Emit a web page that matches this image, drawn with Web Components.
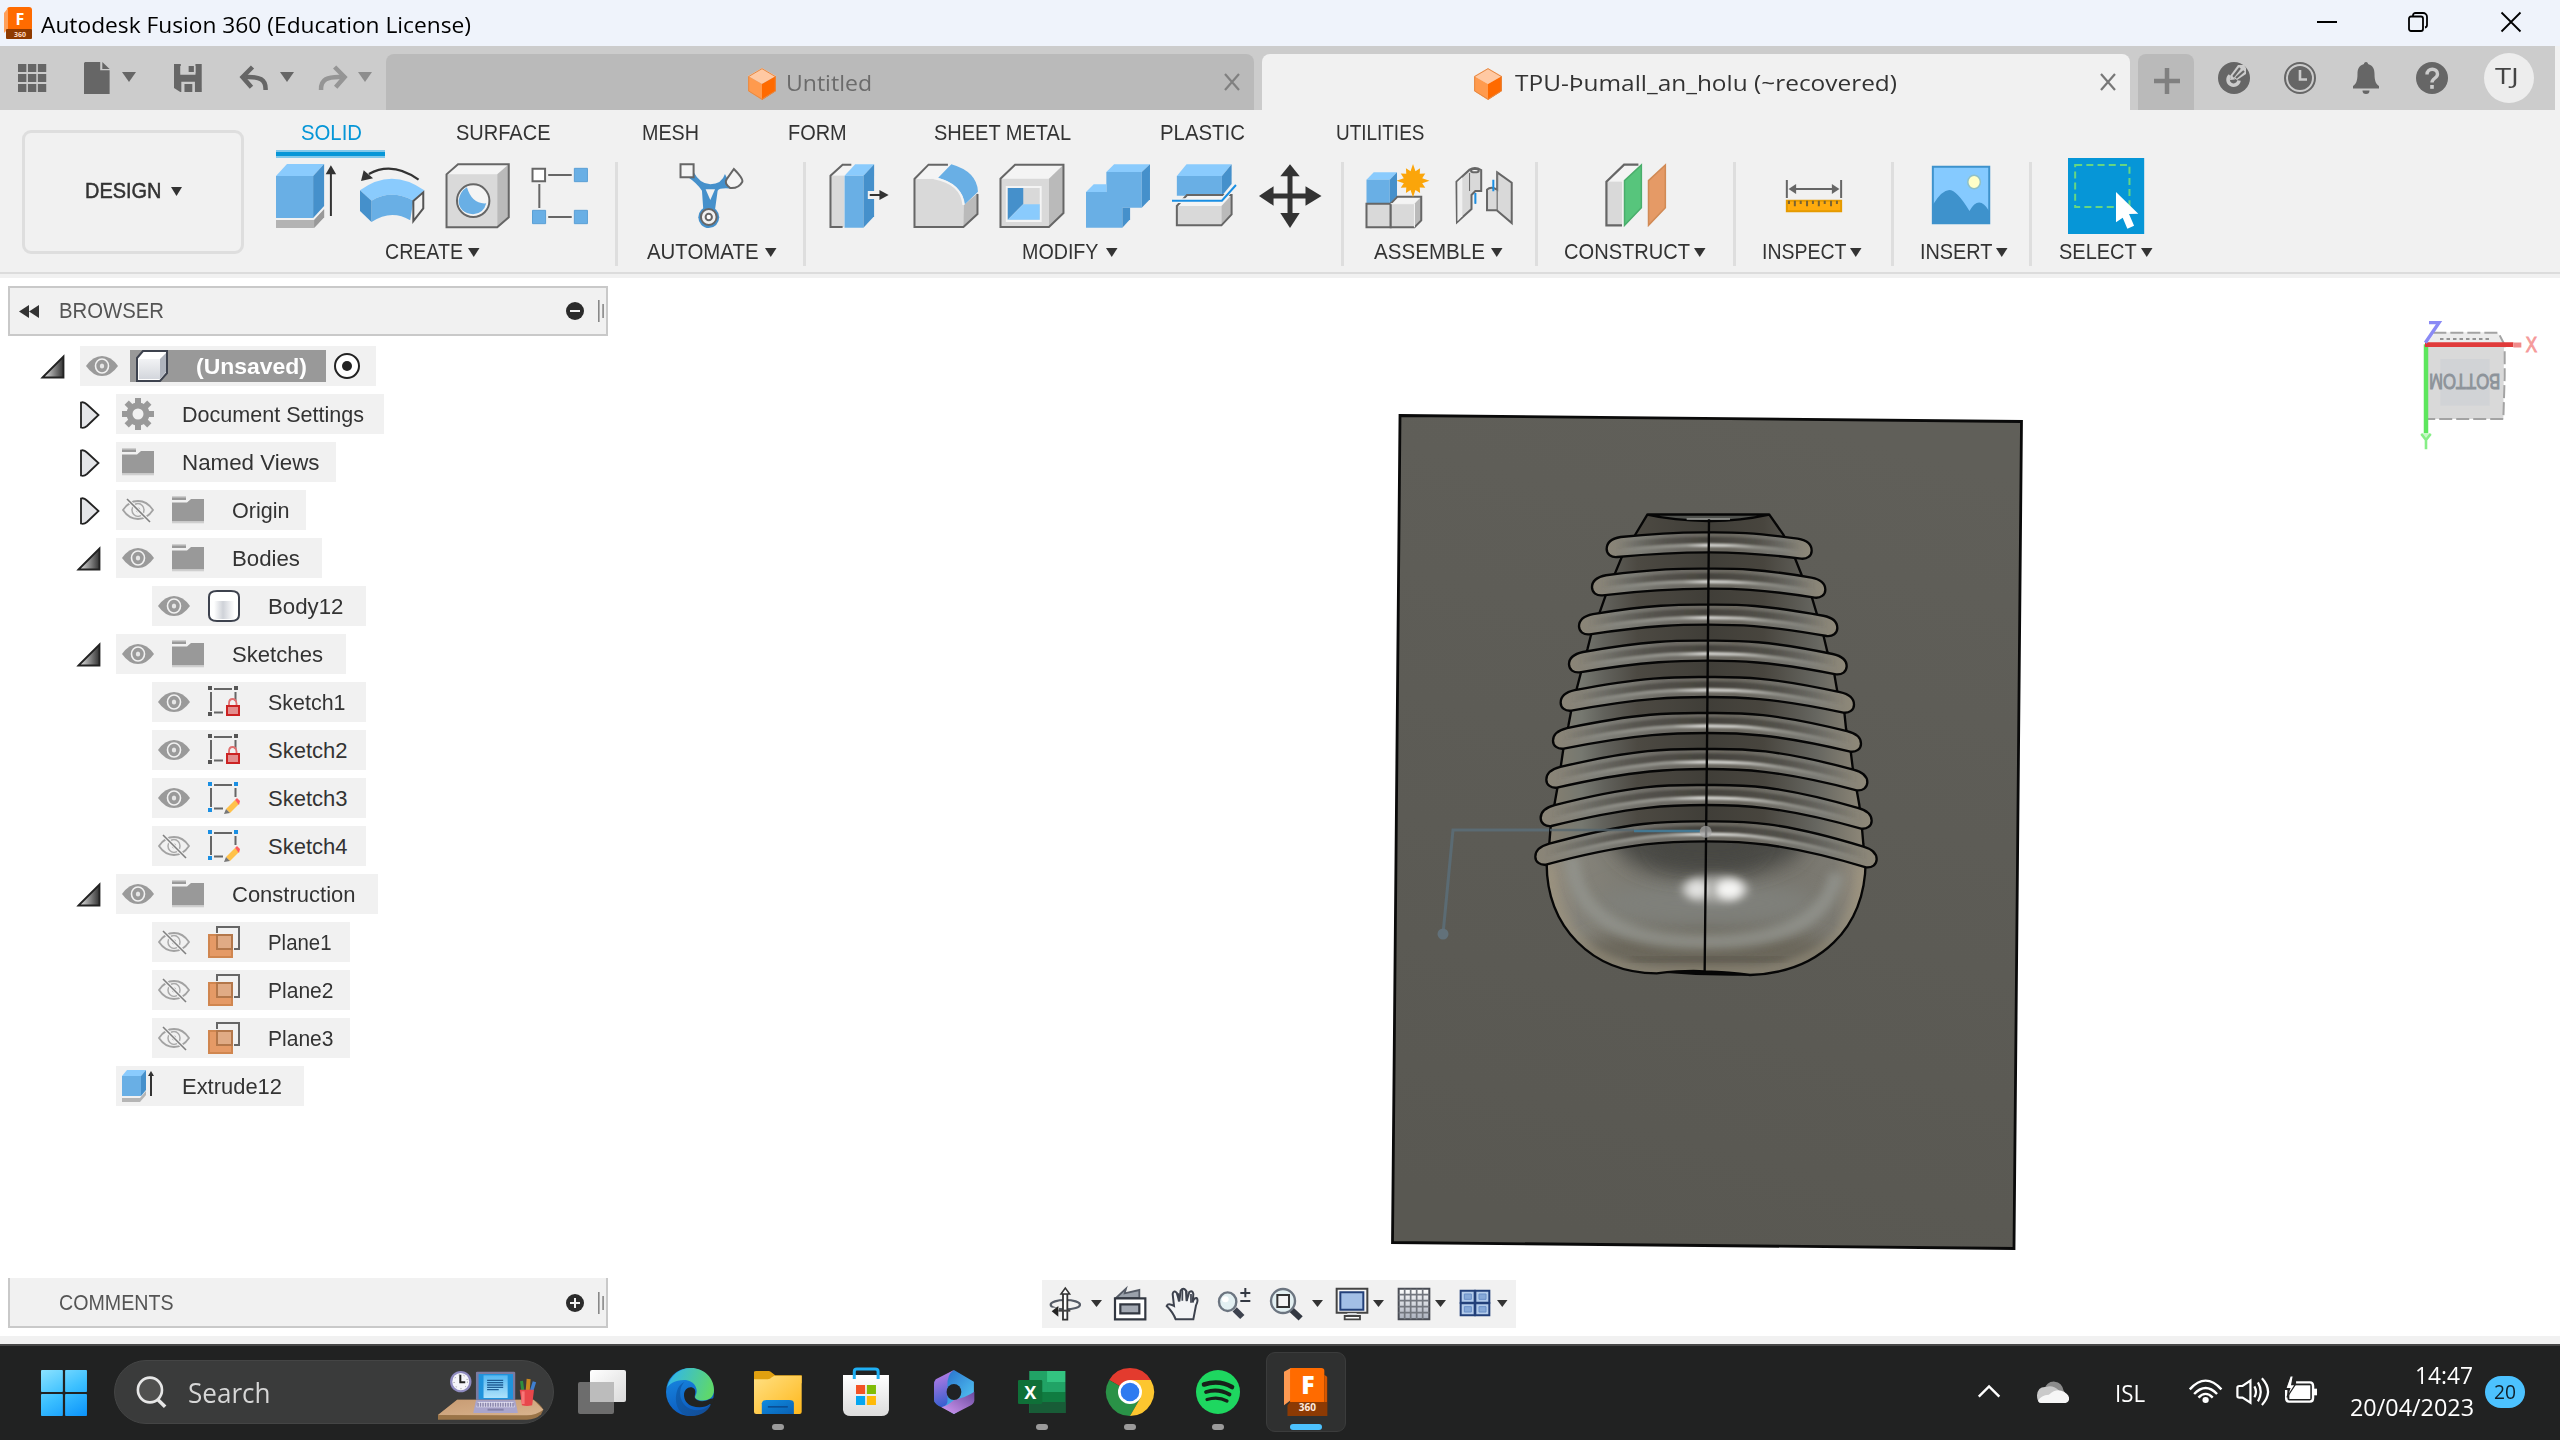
<!DOCTYPE html>
<html lang="en">
<head>
<meta charset="utf-8">
<title>Autodesk Fusion 360</title>
<style>
html,body{margin:0;padding:0;background:#fff}
body{width:2560px;height:1440px;overflow:hidden;font-family:"Liberation Sans",Arial,sans-serif;color:#333}
</style>
</head>
<body>
<fusion-desktop></fusion-desktop>
<script>
const CSS = `*{box-sizing:border-box}svg{display:block;overflow:visible}svg *{vector-effect:non-scaling-stroke}
.row{display:flex;align-items:flex-start;flex:none}.row>*{flex:none}`;

/* drawing frames: origin and horizontal scale of each icon sheet (vertical scale is 3) */
const F = {
  a:[0,0,1568/820], b:[800,110,1568/760], c:[1540,110,1568/660], d:[1200,0,1568/1360],
  t:[0,280,1568/620], u:[0,690,1568/620], v:[2380,300,3], n:[1030,1270,3],
  s:[0,1260,2.24], k:[680,1340,1568/680], y:[1940,1340,1568/620]
};
function ic(f,x0,y0,x1,y1,inner){
  const [ox,oy,s]=F[f], w=(x1-x0)/s, h=(y1-y0)/3;
  return {x:ox+x0/s,y:oy+y0/3,w,h,html:`<svg width="${w.toFixed(2)}" height="${h.toFixed(2)}" viewBox="${x0} ${y0} ${x1-x0} ${y1-y0}" preserveAspectRatio="none">${inner}</svg>`};
}
function px(x,y,w,h,inner){
  return {x,y,w,h,html:`<svg width="${w}" height="${h}" viewBox="0 0 ${w} ${h}">${inner}</svg>`};
}
function tx(t,x0,x1,cy,size,style=''){
  const h=Math.round(size*1.3);
  return {x:x0-.5,y:cy-h/2,w:x1-x0+2,h,html:`<fit-text w="${(x1-x0+2).toFixed(1)}" style="font-size:${size}px;line-height:${h}px;height:${h}px;${style}">${t}</fit-text>`};
}
function box(x,y,w,h,style,html=''){return {x,y,w,h,html:`<div style="width:${w}px;height:${h}px;${style}">${html}</div>`};}
function row(x0,y0,items){
  let c=x0,o='';
  for(const i of items){o+=`<div style="margin:${(i.y-y0).toFixed(2)}px 0 0 ${(i.x-c).toFixed(2)}px;width:${i.w}px">${i.html}</div>`;c=i.x+i.w;}
  return `<div class="row">${o}</div>`;
}
const P=(pts,fill,extra='')=>`<polygon points="${pts}" fill="${fill}" ${extra}/>`;
const R=(x,y,w,h,fill,extra='')=>`<rect x="${x}" y="${y}" width="${w}" height="${h}" fill="${fill}" ${extra}/>`;
const D=(d,fill,extra='')=>`<path d="${d}" fill="${fill}" ${extra}/>`;
const E=(x,y,rx,ry,fill,extra='')=>`<ellipse cx="${x}" cy="${y}" rx="${rx}" ry="${ry}" fill="${fill}" ${extra}/>`;
const L=(d,c,w,extra='')=>`<path d="${d}" fill="none" stroke="${c}" stroke-width="${w}" ${extra}/>`;
const B1='#69afe5',B2='#8acbfd',B3='#4590cb',G1='#d9d9d9',G2='#f4f4f4',G3='#bababa',SK='stroke="#666" stroke-width="2"';
const caret=(x,cy,w=12,h=9,c='#333')=>px(x,cy-h/2,w,h,P(`0,0 ${w},0 ${w/2},${h}`,c));

function def(name,fn){
  customElements.define(name,class extends HTMLElement{
    constructor(){super();this.attachShadow({mode:'open'});}
    connectedCallback(){this.shadowRoot.innerHTML=`<style>${CSS}</style>`+fn(this);}
  });
}

customElements.define('fit-text',class extends HTMLElement{
  constructor(){super();this.attachShadow({mode:'open'}).innerHTML='<style>:host{display:block;white-space:nowrap}span{display:inline-block;transform-origin:0 0}</style><span><slot></slot></span>';}
  connectedCallback(){
    const w=parseFloat(this.getAttribute('w')),s=this.shadowRoot.querySelector('span');
    this.style.width=w+'px';
    const n=s.getBoundingClientRect().width;
    if(n>0)s.style.transform=`scaleX(${(w/n).toFixed(4)})`;
  }
});

/* ---------- title bar ---------- */
def('window-titlebar',()=>`<style>:host{display:block;height:46px;background:#eff3fb;color:#000;font-family:"Open Sans","Noto Sans",sans-serif}</style>`+
 row(0,0,[
  px(4,7,28,32,R(3,0,25,24,'#ff6b00','rx="3"')+D('M0 6L4 1V22L0 26Z','#ff9f5a')+R(2,22,26,10,'#8f3a00','rx="1"')+`<text x="16" y="18" font-size="16" font-weight="700" text-anchor="middle" fill="#fff">F</text><text x="16" y="30" font-size="7" font-weight="700" text-anchor="middle" fill="#ffd9c0">360</text>`),
  tx('Autodesk Fusion 360 (Education License)',41,469,25,21.5),
  px(2317,21,20,3,R(0,0,20,2,'#000')),
  px(2408,12,20,20,L('M1 6.5a2 2 0 0 1 2-2H13a2 2 0 0 1 2 2V17a2 2 0 0 1-2 2H3a2 2 0 0 1-2-2Z','#000',1.8)+L('M5 4.5V3.500a2.500 2.500 0 0 1 2.500-2.500H15a4 4 0 0 1 4 4V13a2.500 2.500 0 0 1-2 2.500','#000',1.8)),
  px(2501,12,20,20,L('M0.500 0.500L19.500 19.500M19.500 0.500L0.500 19.500','#000',1.8))
 ]));

/* ---------- document tabs ---------- */
const cube=(x)=>px(x,68,28,32,P('14,0 28,8 14,16 0,8','#ffc9a3')+P('0,8 14,16 14,32 0,23','#ff9a4d')+P('28,8 14,16 14,32 28,23','#ff6a00')+L('M14 .7L27.300 8.500V23L14 31.200L.7 23V8.500Z','#e58a45',1));
const cross=(x,c)=>px(x-8,74,16,16,L('M1 0L15 16M15 0L1 16',c,2.2));
def('doc-tabs',()=>`<style>:host{display:flex;height:64px;background:#ccc;width:2555px;font-family:"Open Sans","Noto Sans",sans-serif;align-items:flex-start}
 .tab{height:56px;margin-top:8px;border-radius:8px 8px 0 0;flex:none}.q{flex:none;width:386px}</style>`+
 `<div class="q">`+row(0,46,[
  ic('a',34,192,88,276,[0,1,2].map(i=>[0,1,2].map(j=>R(34+i*19,192+j*30,16,24,'#666')).join('')).join('')),
  ic('a',161,186,210,282,D('M163 186H192V211H210V282H161V189Z','#666')+P('196,186 210,207 196,207','#666')),
  caret(122,76.5,14,10,'#666'),
  ic('a',333,192,386,276,D('M333 192H386V276H345L333 264Z','#666')+D('M345 198V224H374V198H370V218H362V198Z','#ccc')+R(346,192,28,28,'#ccc')+R(361,198,10,18,'#666')+D('M347 276V245H373V276H368V252H353V276Z','#ccc')),
  ic('a',460,198,510,270,L('M507 270C508 238 496 229 468 231','#666',4.5)+L('M482 201L463 231L480 262','#666',4.5)),
  caret(280,76.5,14,10,'#666'),
  ic('a',612,198,662,270,L('M614 270C613 238 626 229 654 231','#959595',4.5)+L('M640 201L659 231L642 262','#959595',4.5)),
  caret(358,76.5,14,10,'#8d8d8d')])+`</div>
 <div class="tab" style="width:868px;background:#bababa">`+row(386,54,[cube(748),tx('Untitled',786,870,82.5,22.5,'color:#6b6b6b'),cross(1232,'#808080')])+`</div>
 <div class="tab" style="width:868px;margin-left:8px;background:#f1f1f1">`+row(1262,54,[cube(1474),tx('TPU-Þumall_an_holu (~recovered)',1515,1895,82.5,22.5,'color:#333'),cross(2108,'#777')])+`</div>
 <div class="tab" style="width:56px;margin-left:8px;background:#bababa">`+row(2138,54,[px(2154,68,26,26,L('M13 0V26M0 13H26','#808080',4.5))])+`</div>`+
 row(2194,46,[
  px(2218,62,32,32,E(16,16,16,16,'#666')+L('M12 13.500a5.500 5.500 0 1 0 9 5','#ccc',3.6)+D('M12 14L20 3H26L28 6V12L19 18Z','#ccc')+L('M15 15L22 6M18 16L26 9','#666',2.2)+D('M13 12.500L17 17.500L12 18Z','#ccc')),
  px(2284,62,32,32,E(16,16,15,15,'none','stroke="#666" stroke-width="2"')+E(16,16,12,12,'#666')+L('M16 8V17.500H23','#ccc',2.6)),
  px(2353,62,26,32,D('M13 0c1.500 0 2 1 2 2c5 1.500 6.500 5 6.500 10c0 7 1.500 10 4.500 12v2.500H0V24c3-2 4.500-5 4.500-12c0-5 1.500-8.500 6.500-10c0-1 .5-2 2-2Z','#666')+D('M9.500 28.500h7a3.500 3.500 0 0 1-7 0Z','#666')),
  px(2416,62,32,32,E(16,16,16,16,'#666')+L('M11 12.500c0-7 10.500-7 10.500-.5c0 4.500-5.500 4-5.500 8.500','#ccc',3.4)+R(14.2,23,3.6,3.8,'#ccc')),
  box(2484,53,50,50,'border-radius:50%;background:#ededed;display:flex;align-items:center;justify-content:center;color:#444',`<fit-text w="24" style="font-size:21px;line-height:28px;margin:-4px 0 0 -5px">TJ</fit-text>`)
 ]));

/* ---------- ribbon ---------- */
const blk=(x0,x1,y0,y1,dx,dy,c,ex='')=>P(`${x0},${y0} ${x0+dx},${y0-dy} ${x1+dx},${y0-dy} ${x1},${y0}`,c[1],ex)+P(`${x0},${y0} ${x1},${y0} ${x1},${y1} ${x0},${y1}`,c[0],ex)+P(`${x1},${y0} ${x1+dx},${y0-dy} ${x1+dx},${y1-dy} ${x1},${y1}`,c[2],ex);
const BL=[B1,B2,B3],GR=[G1,G2,G3];
const outl=(x0,x1,y0,y1,dx,dy)=>L(`M${x0} ${y1}V${y0}L${x0+dx} ${y0-dy}H${x1+dx}V${y1-dy}L${x1} ${y1}Z`,'#666',2);
const star=(cx,cy,rx,ry)=>{let s='';for(let i=0;i<24;i++){const a=i*Math.PI/12,k=i%2?.58:(i%6==0?1:.86);s+=`${(cx+Math.sin(a)*rx*k).toFixed(1)},${(cy-Math.cos(a)*ry*k).toFixed(1)} `;}return P(s,'#fba50a');};
const I={
 extrude:ic('a',528,492,642,684,D('M528 660H601L620 628V652L600 684H528Z','#b3b3b3')+D('M601 660L620 628V652L601 684Z','#999')+blk(528,599,528,654,21,36,BL)+L('M633 648V515','#333',2)+P('633,496 623,523 643,523','#333')),
 revolve:ic('a',688,500,811,684,D('M688 570Q748 500 811 570L790 601Q748 565 710 601Z',B2)+D('M710 601Q748 565 790 601L784 660Q748 625 710 665Z',B1)+D('M688 570L710 601V665L688 632Z',B3)+D('M790 602L809 576V624L790 662Z','#f1f1f1','stroke="#555" stroke-width="2"')+L('M800 538Q750 482 705 521','#333',2.2)+P('690,542 695,510 713,534','#333')),
 hole:ic('a',853,492,975,684,blk(854,951,523,682,22,30,GR)+outl(854,951,523,682,22,30)+E(905,602,31,49,'#f4f4f4',SK)+D('M893 562Q903 614 930 610Q925 641 905 643Q878 638 877 602Q880 574 893 562Z',B1)),
 pattern:ic('a',1017,504,1124,672,R(1018,506,24,38,'#fff',SK)+[[1098,505],[1018,631],[1098,631]].map(p=>R(p[0],p[1],25,40,B1,'stroke="#5a9fd5" stroke-width="1"')).join('')+L('M1048 525H1093M1031 552V624M1048 651H1093','#666',2)),
 automate:ic('a',1300,492,1422,684,D('M1314 530L1326 516Q1338 552 1358 553Q1380 552 1386 522L1400 566Q1376 562 1372 572L1366 640H1345L1342 572Q1332 548 1314 530Z',B3)+D('M1349 568H1367L1358 600Z','#f1f1f1')+R(1301,493,25,39,'#f4f4f4',SK)+E(1355,652,20,32,B3)+E(1355,651,15,24,'#f1f1f1',SK)+E(1355,651,6,10,'#fff',SK)+D('M1403 507Q1422 537 1419 546Q1412 566 1396 564Q1384 550 1389 538Z','#f4f4f4',SK)),
 press:ic('b',62,162,182,354,P('63,197 88,164 112,164 92,197',G2)+R(63,197,28,154,G1)+L('M88 351H63V197L88 164H106','#666',2)+blk(92,131,197,353,22,34,BL)+R(140,243,20,24,'#f1f1f1')+L('M144 255H172','#333',2)+P('183,255 164,240 164,270','#333')),
 fillet:ic('b',235,162,367,354,D('M236 207L265 164H312L285 205Z',G2)+D('M236 207H285Q335 225 338 285V352H236Z',G1)+D('M338 285L366 250V312L337 352Z',G3)+L('M305 164H265L236 207V351H337L366 312V252','#666',2)+D('M285 203L312 163Q365 185 367 245L340 283Q335 225 285 203Z',B1)+L('M276 205Q333 220 337 285','#f4f4f4',2)),
 shell:ic('b',413,162,545,354,blk(414,514,206,351,30,42,GR)+outl(414,514,206,351,30,42)+R(425,228,74,108,'#f4f4f4')+R(429,234,66,95,G1)+P('429,234 461,234 461,282 429,329',B3)+P('429,329 461,283 495,283 495,329',B2)),
 combine:ic('b',590,162,722,354,D('M590 246H632V186H705V293H665V353H590Z',B1)+P('632,186 648,163 722,163 705,186',B2)+P('590,246 606,223 632,223 632,246',B2)+P('705,186 722,163 722,268 705,293',B3)+P('665,293 681,293 681,328 665,353',B3)),
 split:ic('b',767,162,900,354,blk(777,870,198,257,20,35,BL)+blk(777,869,288,346,21,33,GR)+outl(777,869,288,346,21,33)+D('M770 265H868L893 222L902 226L872 279H770Z','#f4f4f4')+L('M767 272H870L899 225','#1a8fe3',2)),
 move:ic('b',947,162,1076,354,L('M1011 185V335M965 258H1058','#333',5)+P('1011,163 991,199 1031,199','#333')+P('1011,354 991,309 1031,309','#333')+P('947,258 977,229 977,287','#333')+P('1076,258 1043,229 1043,287','#333')),
 assemble:ic('b',1168,162,1298,354,blk(1169,1217,209,281,15,22,BL)+R(1169,281,50,71,G1,SK)+blk(1219,1268,281,352,14,21,GR)+outl(1219,1268,281,352,14,21)+L('M1219 281H1268V352','#f4f4f4',1)+star(1265,212,34,50)),
 joint:ic('b',1353,172,1469,342,D('M1354 216L1381 180Q1392 170 1405 181V244H1393L1385 256V298L1355 338Z',G1,SK)+P('1356,216 1366,203 1366,320 1356,335','#f0f0f0')+E(1392,183,8,5,'#fff',SK)+L('M1381 190V244M1393 250V282','#666',1)+D('M1438 188L1468 219V340L1437 302H1417V240Q1425 228 1438 240Z',G1,SK)+L('M1438 188V302','#777',1.3)+L('M1393 250V282M1430 210V245','#1a8fe3',2)),
 construct:ic('c',157,162,300,348,P('158,215 200,164 241,164 201,215',G2)+R(158,215,37,131,G1)+L('M195 346H158V215L200 164H234','#666',2.2)+P('201,212 241,165 241,293 201,346','#57c57c','stroke="#49ae6b" stroke-width="1.5"')+P('258,212 298,165 298,293 258,346','#e59a66','stroke="#d18a55" stroke-width="1.5"')),
 inspect:ic('c',584,210,717,306,L('M586 210V264M715 210V264M600 237H702','#666',2)+P('590,237 608,222 608,252','#666')+P('711,237 693,222 693,252','#666')+R(586,272,129,32,'#ffab0d','stroke="#e59a00" stroke-width="2"')+L('M591 272V282M605 272V289M619 272V282M634 272V289M648 272V282M662 272V289M676 272V282M691 272V289M705 272V282','#7b6433',2)),
 insert:ic('c',931,168,1069,342,R(933,170,134,170,'#85caff','stroke="#3e92cc" stroke-width="2"')+E(1031,216,15,20,'#ffffc8','stroke="#8fc0c8" stroke-width="1.500"')+D('M933 284Q955 240 972 240Q990 240 1020 303Q1043 252 1067 304V341H933Z','#3e92cc')),
 select:ic('c',1254,144,1435,372,R(1254,144,181,228,'#0696d7')+R(1271,165,129,126,'none','stroke="#66d682" stroke-width="2" stroke-dasharray="7 4.200"')+P('1368,246 1421,311 1399,312 1411,347 1395,356 1384,323 1368,337','#fff'))
};
const G=[
 [246,616,['extrude','revolve','hole','pattern'],'CREATE',385,461.5,468],
 [616,804,['automate'],'AUTOMATE',647,757,765],
 [804,1342,['press','fillet','shell','combine','split','move'],'MODIFY',1022,1097,1106],
 [1342,1536,['assemble','joint'],'ASSEMBLE',1374,1483.5,1491],
 [1536,1734,['construct'],'CONSTRUCT',1564,1688.6,1694],
 [1734,1892,['inspect'],'INSPECT',1762,1845,1850],
 [1892,2030,['insert'],'INSERT',1920,1991,1996],
 [2030,2300,['select'],'SELECT',2058.5,2134.7,2141]];
def('ribbon-group',(el)=>{const g=G[+el.getAttribute('index')];
 return `<style>:host{display:flex;flex:none;width:${g[1]-g[0]}px;height:115px}.c{flex:1;min-width:0}.i{height:77px}
 .s{flex:none;width:3px;height:104px;margin:5px -2px 0 0;background:#dedede}</style><div class="c"><div class="i">`+
 row(g[0],157,g[2].map(k=>I[k]))+`</div>`+row(g[0],234,[tx(g[3],g[4]+.5,g[5],251.5,22),caret(g[6],252,11.5,9)])+`</div>${g[1]<2300?'<div class="s"></div>':''}`;});
def('tool-ribbon',()=>`<style>:host{display:flex;height:168px;background:#f1f1f1;position:static}
 .left{width:246px;flex:none;padding:20px 0 0 22px}.design{width:222px;height:124px;border:3px solid #dedede;border-radius:9px}
 .right{flex:1;display:flex;flex-direction:column}.tabs{height:47px}.names{height:40px}.groups{display:flex;height:115px}.line{height:2px;background:#dcdcdc;margin-left:-246px}</style>
 <div class="left"><div class="design">`+row(25,133,[tx('DESIGN',85,159.5,190.5,21.5,'-webkit-text-stroke:.5px #333'),caret(171,191,11,9)])+`</div></div>
 <div class="right"><div class="tabs"><div class="names">`+row(246,110,[tx('SOLID',301,360,132,22,'color:#0696d7'),
  tx('SURFACE',456.5,549,132,22),tx('MESH',642,697,132,22),tx('FORM',788,844.6,132,22),tx('SHEET METAL',934.5,1069.5,132,22),tx('PLASTIC',1160.6,1243.5,132,22),tx('UTILITIES',1336.6,1423,132,22)])+`</div>`+
 row(246,150,[box(276,150,109,8,'background:#0696d7;border:solid #83c8ea;border-width:2px 0')])+`</div>
 <div class="groups">${G.map((g,i)=>`<ribbon-group index="${i}"></ribbon-group>`).join('')}</div><div class="line"></div></div>`);

/* ---------- browser tree ---------- */
const eye=px(0,0,32,20,D('M0 10Q7 0 16 0T32 10Q25 20 16 20T0 10Z','#9a9a9a')+E(16,10,6.5,7,'#9a9a9a','stroke="#f1f1f1" stroke-width="1.600"')+E(16,10,2.2,2.6,'#e6e6e6')).html;
const noeye=px(0,0,32,24,L('M1 12Q7 3 16 3T31 12Q25 21 16 21T1 12Z','#a2a2a2',1.8)+E(16,12,6,6.5,'none','stroke="#aaa" stroke-width="1.500"')+E(16,12,2.2,2.4,'#aaa')+L('M4 0L28 24','#f1f1f1',3.5)+L('M5 1L28 24','#808080',1.6)).html;
const T={
 folder:px(0,0,32,28,R(0,0,14,4,'#999')+D('M0 6.500H15L19 3H32V25.500H0Z','#999')+R(0,25.5,32,1.8,'#cfcfcf')+R(0,0,14,1.5,'#cfcfcf')).html,
 gear:px(0,0,32,32,[0,45,90,135].map(a=>R(13,0,6,32,'#999',`transform="rotate(${a} 16 16)"`)).join('')+E(16,16,11.5,11.5,'#999')+E(16,16,5.5,5.5,'#f1f1f1')).html,
 body:px(0,0,32,32,`<defs><linearGradient id="bg"><stop offset="0" stop-color="#fff"/><stop offset=".45" stop-color="#cfd2d8"/><stop offset="1" stop-color="#fdfdfe"/></linearGradient></defs>`+D('M1 7Q1 1 9 1H23Q31 1 31 7V25Q31 31 23 31H9Q1 31 1 25Z','#fff')+R(6,11,20,18,'url(#bg)')+D('M1 7Q1 1 9 1H23Q31 1 31 7V25Q31 31 23 31H9Q1 31 1 25Z','none','stroke="#3d424e" stroke-width="2"')).html,
 cube:px(0,0,32,32,`<defs><linearGradient id="cg" x2="0" y2="1"><stop offset="0" stop-color="#f2f3f5"/><stop offset="1" stop-color="#d3d6dc"/></linearGradient></defs>`+D('M1 8L7 1H31V23L24 31H1Z','#fff','stroke="#3d424e" stroke-width="2"')+R(3,9,21,20,'url(#cg)')+P('24,9 30,3 30,22 24,29','#aeb3bd')).html,
 plane:px(0,0,32,32,L('M9 7V1H31V23H26','#666',2)+R(1,9,23,22,'#e59a66','stroke="#d0864f" stroke-width="2"')+R(9,9,15,14,'#e0ab85','stroke="#b3774a" stroke-width="2"')).html,
 extrude:px(0,0,32,32,D('M0 28H18L24 21V25L18 32H0Z','#b5b5b5')+P('0,6 5,0 24,0 19,6',B2)+R(0,6,19,20,B1)+P('19,6 24,0 24,20 19,26',B3)+L('M29 26V3','#333',2)+P('29,1 26,6 32,6','#333')).html
};
const sk=(c,e)=>px(0,0,32,32,R(0,0,4,4,c)+R(26,0,4,4,c)+R(0,26,4,4,c)+L('M6 3H24M3 6V25M27.500 6V15M6 26.500H15','#666',2)+e).html;
T.lock=sk('#555',L('M21 20V17.500Q21 13 24.500 13T28.500 17.500V20','#e07070',1.8)+R(19,20,12,9,'#e38d8d','stroke="#cc2222" stroke-width="2"'));
T.pencil=sk('#1a8fe3',P('18,27 27,18 31,22 22,31','#ffc14a')+P('27,18 29,16 32,19 31,23','#ff5c5c')+P('16,32 18,27 22,31','#777'));
const open=px(0,0,24,24,`<defs><linearGradient id="tg"><stop offset="0" stop-color="#eee"/><stop offset="1" stop-color="#333"/></linearGradient></defs>`+P('1.500,22.500 22.500,1.500 22.500,22.500','url(#tg)','stroke="#222" stroke-width="1.800"')).html;
const closed=px(0,0,20,28,D('M1 1.500Q4 .5 7 3.500L18.500 14L7 25Q4 27.500 1 26.500Z','#e4e5e8','stroke="#222" stroke-width="1.800"')).html;
def('tree-row',(el)=>{const a=n=>el.getAttribute(n),d=+a('depth'),bx=[80,116,152][d],end=+a('end');
 const tri=a('tri'),ey=a('eye'),k=a('icon'),tw=+a('tw');
 const lab=`<fit-text w="${tw+2}" style="font-size:22px;line-height:40px;height:40px;margin:1px 0 0 1px;${d?'':'font-weight:700;color:#fff'}"><slot></slot></fit-text>`;
 return `<style>:host{display:flex;height:40px;margin-bottom:8px;align-items:center}
 .t{width:${bx}px;flex:none;display:flex;justify-content:flex-end;padding:1px ${tri=='open'?15:16}px 0 0}
 .b{display:flex;align-items:center;height:40px;width:${end-bx}px;background:#f1f1f1;padding-left:6px;flex:none}
 .e{width:50px;flex:none}.k{width:59px;flex:none}.hl{display:flex;align-items:center;background:#999;height:32px;width:196px;margin-left:-6px;padding-left:6px}
 .rad{margin-left:8px}</style>
 <div class="t">${tri=='open'?open:tri?closed:''}</div><div class="b">${ey?`<div class="e">${ey=='on'?eye:noeye}</div>`:''}`+
 (d?`<div class="k">${T[k]}</div>${lab}`:`<div class="hl"><div class="k">${T[k]}</div>${lab}</div><div class="rad">${px(0,0,26,26,E(13,13,12,12,'#fff','stroke="#222" stroke-width="2"')+E(13,13,5,5,'#222')).html}</div>`)+`</div>`;});
const bars=(y)=>px(598,y,7,22,R(0,0,1.6,22,'#888')+R(4.3,4,1.600,14,'#888'));
const circ=(y,plus)=>px(566,y,18,18,E(9,9,9,9,'#2b2b2b')+L('M4 9H14'+(plus?'M9 4V14':''),'#f1f1f1',2));
const rows=[
 [0,376,'open','on','cube','(Unsaved)',109],[1,384,'closed','','gear','Document Settings',180],[1,336,'closed','','folder','Named Views',135.5],
 [1,306,'closed','off','folder','Origin',55.5],[1,322,'open','on','folder','Bodies',66],[2,366,'','on','body','Body12',73.5],
 [1,346,'open','on','folder','Sketches',89],[2,366,'','on','lock','Sketch1',75.5],[2,366,'','on','lock','Sketch2',77.5],[2,366,'','on','pencil','Sketch3',77.5],[2,366,'','off','pencil','Sketch4',77.5],
 [1,378,'open','on','folder','Construction',121.500],[2,350,'','off','plane','Plane1',61.5],[2,350,'','off','plane','Plane2',63.5],[2,350,'','off','plane','Plane3',63.5],[1,304,'','','extrude','Extrude12',98]];
def('browser-panel',()=>`<style>:host{display:flex;flex-direction:column;width:620px;flex:none;padding-top:8px}
 .hd{height:50px;width:600px;margin-left:8px;border:2px solid #c9c9c9;background:#f1f1f1}.tree{margin-top:10px;flex:1}.cm{border-top:0;margin-bottom:8px}</style>
 <div class="hd">`+row(10,288,[px(18.5,305,20,13,P('10,0 10,13 0,6.500','#333')+P('20,0 20,13 10,6.500','#333')),tx('BROWSER',59,162,310.5,21.5,'color:#555'),circ(302),bars(300)])+`</div>
 <div class="tree">${rows.map(r=>`<tree-row depth="${r[0]}" end="${r[1]}" tri="${r[2]}" eye="${r[3]}" icon="${r[4]}" tw="${r[6]}">${r[5]}</tree-row>`).join('')}</div>
 <div class="hd cm">`+row(10,1278,[tx('COMMENTS',59,171.5,1302.500,21.5,'color:#555'),circ(1294,1),bars(1292)])+`</div>`);

/* ---------- 3D model ---------- */
const rings=[[320,203,935,208,157],[276,318,976,325,266],[237,435,1012,440,374],[207,549,1040,555,482],[182,664,1062,670,591],[159,778,1083,787,699],[139,895,1102,903,807],[122,1010,1115,1018,915],[106,1126,1130,1134,1024]];
/* closed ring outline: shallow arcs above and below, joined by slanted round tips */
const ringShape=r=>{const [x0,y0,x1,y1,t]=r,b=t+60,w=x1-x0,s=(y0+y1)/2-(t+30);const k=s*.42;
 return `M${x0} ${y0+4}C${x0} ${y0-16} ${x0+14} ${y0-27} ${x0+42} ${y0-31-k*.12}C${x0+w*.3} ${t-k*.18} ${x0+w*.4} ${t} ${(x0+x1)/2} ${t}C${x0+w*.6} ${t} ${x0+w*.7} ${t-k*.18} ${x1-42} ${y1-31-k*.12}C${x1-14} ${y1-27} ${x1} ${y1-16} ${x1} ${y1+4}C${x1} ${y1+20} ${x1-14} ${y1+30} ${x1-32} ${y1+28}C${x0+w*.72} ${b+k*.05} ${x0+w*.6} ${b} ${(x0+x1)/2} ${b}C${x0+w*.4} ${b} ${x0+w*.28} ${b+k*.05} ${x0+32} ${y0+28}C${x0+14} ${y0+30} ${x0} ${y0+20} ${x0} ${y0+4}Z`;};
const ringLine=(r,o,ins)=>{const [X0,y0,X1,y1,t]=r,x0=X0+ins,x1=X1-ins,w=x1-x0,m=t+30+o;
 return `M${x0} ${y0+o}C${x0+w*.28} ${m} ${x0+w*.4} ${m} ${(x0+x1)/2} ${m}C${x0+w*.6} ${m} ${x0+w*.72} ${m} ${x1} ${y1+o}`;};
const bodyD='M442 104L407 162L365 232L345 280L317 346L299 397L273 465L263 505L243 577L230 627L214 690L205 738L190 807L183 855L172 925L163 975L152 1040L148 1090L140 1155H1097L1090 1092L1086 1045L1078 975L1070 930L1058 862L1052 813L1038 745L1033 697L1012 635L1003 583L982 515L970 465L950 400L935 350L905 285L885 235L850 164L808 104Z';
const domeD='M140 1145C138 1340 275 1479 470 1480Q560 1470 615 1474Q690 1476 750 1485C960 1478 1095 1345 1097 1145Q620 990 140 1145Z';
def('model-view',()=>`<style>:host{display:block;width:660px;height:860px}svg *{vector-effect:none}</style>
<svg width="660" height="860" viewBox="1380 400 660 860"><defs>
<linearGradient id="pl" x1=".6" y1="0" x2=".4" y2="1"><stop offset="0" stop-color="#605f59"/><stop offset="1" stop-color="#595852"/></linearGradient>
<linearGradient id="bd" gradientUnits="userSpaceOnUse" x1="150" x2="1090" y1="0" y2="0"><stop offset="0" stop-color="#857f70"/><stop offset=".1" stop-color="#767870"/><stop offset=".17" stop-color="#62625c"/><stop offset=".28" stop-color="#4c4942"/><stop offset=".5" stop-color="#403e38"/><stop offset=".68" stop-color="#48453e"/><stop offset=".85" stop-color="#666660"/><stop offset="1" stop-color="#8d8778"/></linearGradient>
<linearGradient id="rg"><stop offset="0" stop-color="#8b8577"/><stop offset=".15" stop-color="#7f7f78"/><stop offset=".35" stop-color="#6e6c66"/><stop offset=".6" stop-color="#6a675f"/><stop offset=".85" stop-color="#797973"/><stop offset="1" stop-color="#8f8979"/></linearGradient>
<linearGradient id="hl"><stop offset="0" stop-color="#92928b" stop-opacity="0"/><stop offset=".2" stop-color="#92928b" stop-opacity=".8"/><stop offset=".38" stop-color="#9b9b95"/><stop offset=".48" stop-color="#dededb"/><stop offset=".58" stop-color="#d2d2ce"/><stop offset=".75" stop-color="#92928b"/><stop offset="1" stop-color="#92928b" stop-opacity="0"/></linearGradient>
<linearGradient id="dk"><stop offset="0" stop-color="#504e48" stop-opacity="0"/><stop offset=".25" stop-color="#504e48" stop-opacity=".8"/><stop offset=".5" stop-color="#45433d"/><stop offset=".75" stop-color="#4b4943" stop-opacity=".8"/><stop offset="1" stop-color="#504e48" stop-opacity="0"/></linearGradient>
<linearGradient id="dm" gradientUnits="userSpaceOnUse" x1="140" x2="1097" y1="0" y2="0"><stop offset="0" stop-color="#989080"/><stop offset=".1" stop-color="#85837a"/><stop offset=".5" stop-color="#706e66"/><stop offset=".9" stop-color="#7c7a72"/><stop offset="1" stop-color="#9d9482"/></linearGradient>
<filter id="b1" x="-40%" y="-60%" width="180%" height="220%"><feGaussianBlur stdDeviation="28"/></filter><filter id="b2" x="-40%" y="-60%" width="180%" height="220%"><feGaussianBlur stdDeviation="13"/></filter><filter id="b3" x="-10%" y="-100%" width="120%" height="300%"><feGaussianBlur stdDeviation="3.500"/></filter>
<clipPath id="dc"><path d="${domeD}"/></clipPath></defs>
<polygon points="1400,415.500 2021.500,421.500 2014,1248.500 1392.500,1242.500" fill="url(#pl)" stroke="#0a0a0a" stroke-width="2.800"/>
<path d="M1443 934L1453 830H1550" fill="none" stroke="#5b6b73" stroke-width="3"/><circle cx="1443" cy="934" r="5.500" fill="#62717a"/>
<g transform="translate(1500 480) scale(.33333)">
<path d="${bodyD}" fill="url(#bd)" stroke="#060606" stroke-width="7"/>
<path d="M442 104H808Q715 124 625 123Q520 122 442 104Z" fill="#50524e" stroke="#060606" stroke-width="7"/><path d="M560 117H690" stroke="#9a9b97" stroke-width="5"/>
<g clip-path="url(#dc)"><path d="${domeD}" fill="url(#dm)"/>
<ellipse cx="620" cy="1410" rx="380" ry="60" fill="#6b665a" filter="url(#b1)"/>
<ellipse cx="620" cy="1270" rx="330" ry="70" fill="#7f807a" filter="url(#b1)"/>
<path d="M215 1130Q230 1390 620 1385Q970 1385 1010 1180" fill="none" stroke="#93948e" stroke-width="44" opacity=".8" filter="url(#b2)"/>
<path d="M310 1050Q620 990 930 1050L890 1130Q760 1200 620 1190Q450 1195 370 1130Z" fill="#4c4b47" filter="url(#b1)"/>
<path d="M450 1060H800L760 1130Q620 1160 480 1130Z" fill="#474642" filter="url(#b1)"/>
<path d="M390 1442Q620 1428 860 1442" fill="none" stroke="#5c574c" stroke-width="24" opacity=".6" filter="url(#b2)"/>
<path d="M150 1170C155 1345 285 1465 470 1473H760C950 1465 1080 1345 1087 1170" fill="none" stroke="#a0967f" stroke-width="16" opacity=".8" filter="url(#b2)"/>
<ellipse cx="645" cy="1228" rx="105" ry="40" fill="#a5a5a1" filter="url(#b2)"/>
<ellipse cx="592" cy="1228" rx="34" ry="27" fill="#e4e4e2" filter="url(#b2)"/><ellipse cx="688" cy="1228" rx="42" ry="30" fill="#f6f6f4" filter="url(#b2)"/></g>
<path d="M140 1145C138 1340 275 1479 470 1480Q560 1470 615 1474Q690 1476 750 1485C960 1478 1095 1345 1097 1145" fill="none" stroke="#060606" stroke-width="7"/>
<path d="M490 1478Q560 1468 615 1474Q680 1472 750 1487Q620 1490 490 1478Z" fill="#060606"/>
${rings.map(r=>`<path d="${ringShape(r)}" fill="url(#rg)"/><path d="${ringLine(r,-7,30)}" fill="none" stroke="url(#dk)" stroke-width="20" filter="url(#b3)"/><path d="${ringLine(r,9,30)}" fill="none" stroke="url(#hl)" stroke-width="9" filter="url(#b3)"/><path d="${ringShape(r)}" fill="none" stroke="#060606" stroke-width="7"/>`).join('')}
<path d="M627 118L621 800L614 1476" fill="none" stroke="#060606" stroke-width="7"/>
<path d="M150 1050H402" stroke="#56676f" stroke-width="7" opacity=".8"/><path d="M402 1053H600" stroke="#447892" stroke-width="7"/><circle cx="617" cy="1055" r="18" fill="#a9a9a9" opacity=".7"/>
</g></svg>`);

def('view-cube',()=>`<style>:host{display:block;width:180px;height:160px;font-family:"Liberation Sans",Arial,sans-serif}</style>
<svg width="180" height="160" viewBox="0 0 540 480">
${P('165,97 352,97 372,130 142,130','#ececec')}${P('142,135 372,135 370,357 142,357','#d9d9d9')}${R(181,177,148,140,'#d1d3d6')}
${L('M160 98H355L374 135V230L370 357H142','#a3a3a3',2,'stroke-dasharray="13 4"')}
${L('M180 117H330','#777',1.6,'stroke-dasharray="3.500 3"')}
<g transform="translate(361 223) rotate(180)"><text x="0" y="0" font-size="66" fill="#8d939a" stroke="#8d939a" textLength="214" lengthAdjust="spacingAndGlyphs">BOTTOM</text></g>
${L('M138 133V400','#5de65d',4.500)}${P('122,400 154,400 138,424','#c8f8c8')}${L('M124 402L138 420L152 402M138 415V448','#86ee86',2.6)}
${L('M135 134H400','#e03a3a',4.600)}${L('M400 135H424','#f08a8a',5)}
${L('M147 68H177L136 128','#8a8af5',3.4)}
<text x="437" y="155" font-size="64" fill="#f59a9a" stroke="#f59a9a" textLength="34" lengthAdjust="spacingAndGlyphs">X</text></svg>`);

/* ---------- navigation bar ---------- */
def('nav-bar',()=>`<style>:host{display:block;width:474px;height:48px;background:#f1f1f1}</style>`+row(1042,1280,[
 ic('n',53,54,150,150,E(105,104,44,14,'none','stroke="#555b66" stroke-width="2.200"')+R(62,113,24,14,'#f1f1f1')+P('64,124 84,108 84,140','#222')+R(98,70,13,79,'#fff','stroke="#333" stroke-width="1.800"')+P('105,54 92,72 118,72','#fff','stroke="#333" stroke-width="1.500"')+L('M84 122H120','#444',2)),
 caret(1091,1303.5,11,7),
 ic('n',252,54,348,150,D('M258 84L288 56L284 70L328 60V84Z','#9aa1ab','stroke="#555b66" stroke-width="1.800"')+R(255,85,91,63,'#fff','stroke="#333842" stroke-width="2.200"')+R(271,103,57,27,'#a3a9b3','stroke="#333842" stroke-width="2.200"')),
 ic('n',408,54,505,150,D('M437 148Q430 128 410 108Q414 98 432 108L428 72Q430 60 440 68L448 94L452 62Q460 50 468 62L470 92L478 66Q488 60 490 72L488 98Q490 84 500 84Q506 90 498 106L490 148Z','#f3f4f6','stroke="#3d424e" stroke-width="2"')+L('M446 94V70M457 92V60M470 94V62M483 98V72','#3d424e',1.700)),
 ic('n',563,54,660,150,L('M613 118L636 141','#3d424e',6)+E(592,95,26,28,'#e3f0f2','stroke="#6c7580" stroke-width="2.400"')+E(585,88,10,9,'#fff')+L('M645 54V82M630 69H660M630 93H660','#333842',2)),
 ic('n',720,54,817,150,L('M783 118L812 145','#333842',6)+E(759,93,36,36,'#e3f0f2','stroke="#6c7580" stroke-width="2.400"')+R(742,75,35,36,'#f4f4f4','stroke="#333" stroke-width="2"')),
 caret(1312,1303.5,11,7),
 ic('n',918,54,1014,150,R(920,56,92,72,'#f5f5f5','stroke="#444" stroke-width="2"')+R(931,67,69,52,'#a3bfe6','stroke="#23407a" stroke-width="2"')+R(952,129,28,12,'#d5d8dd')+R(944,138,46,10,'#fff','stroke="#444" stroke-width="1.800"')),
 caret(1373,1303.5,11,7),
 ic('n',1104,54,1200,150,`<defs><linearGradient id="gg" x2="0" y2="1"><stop offset="0" stop-color="#fff"/><stop offset="1" stop-color="#aab0bd"/></linearGradient></defs>`+R(1106,56,92,92,'url(#gg)','stroke="#4a4d55" stroke-width="2"')+L('M1124 56V148M1142 56V148M1160 56V148M1178 56V148M1106 74H1198M1106 92H1198M1106 110H1198M1106 128H1198','#73777f',1.700)),
 caret(1435,1303.5,11,7),
 ic('n',1290,60,1380,138,[[1292,62],[1336,62],[1292,100],[1336,100]].map(p=>R(p[0],p[1],42,36,'#b3cbea','stroke="#23407a" stroke-width="2"')+R(p[0]+11,p[1]+10,21,16,'#87a9d8','stroke="#6a90c8" stroke-width="1"')).join('')),
 caret(1497,1303.5,10.5,7)]));
def('model-viewport',()=>`<style>:host{display:flex;flex:1;flex-direction:row;height:1058px}
 .m{width:1420px;display:flex;flex-direction:column;align-items:flex-start}model-view{margin:122px 0 0 760px}nav-bar{margin:20px 0 0 422px}view-cube{margin:22px 0 0 340px}</style>
 <div class="m"><model-view></model-view><nav-bar></nav-bar></div><view-cube></view-cube>`);

/* ---------- taskbar ---------- */
const lg=(id,a,b,dir='x2="1" y2="1"')=>`<linearGradient id="${id}" ${dir}><stop offset="0" stop-color="${a}"/><stop offset="1" stop-color="${b}"/></linearGradient>`;
const desk=ic('s',981,334,1217,480,`<defs>${lg('ds','#55b8f2','#aee2fb','x2="0" y2="1"')}${lg('wd','#c79b73','#d9b48e')}</defs>`+
 D('M981 466L1024 420H1195Q1210 432 1217 450L1212 464Q1200 480 1180 480H981Z','#9a7448')+D('M981 466L1024 420H1195L1217 450Q1200 467 1180 467Z','url(#wd)')+
 E(1032,366,24,32,'#8f8bc0')+E(1032,366,19,26,'#f5f5fa')+L('M1031 345V368H1042','#222',2)+E(1032,366,15,21,'none','stroke="#888" stroke-width="1" stroke-dasharray="1 4"')+
 R(1066,336,88,86,'#7b7ba0','rx="3"')+R(1072,343,77,76,'#1f93dc')+R(1083,347,54,68,'url(#ds)')+L('M1091 362H1127M1091 369H1127M1091 376H1127M1091 383H1127M1091 390H1117','#1f5e95',1.3)+
 D('M1066 422H1154L1160 460H1060Z','#a9a5cc')+D('M1070 427H1150L1153 443H1067Z','#e4e1f2')+L('M1069 435H1152','#8884ab',4,'stroke-dasharray="1.500 1"')+R(1092,447,36,6,'#8481a8')+
 L('M1171 392L1168 364','#2f8f3d',3)+L('M1182 392L1184 358','#c9871f',4)+L('M1191 392L1197 366','#3f7fd0',3.500)+D('M1164 390H1196L1192 437Q1180 441 1169 437Z','#e8474b')+R(1168,395,7,38,'#ff8a8a','opacity=".7"'));
const dot=(x,w=12,c='#9b9b9b')=>`<div style="width:${w}px;height:6px;border-radius:3px;background:${c}"></div>`;
const app=(x,it,run)=>({x,y:1346,w:it.w,h:90,html:`<div style="height:90px;display:flex;flex-direction:column;align-items:center"><div style="margin-top:${(it.y-1346).toFixed(2)}px;height:${(1424-it.y).toFixed(2)}px">${it.html}</div>${run||''}</div>`});
const A={
 edge:px(666,1368,48,48,`<defs>${lg('e1','#2fb4f2','#5fd86a','x1="0" y1=".2" x2="1" y2=".45"')}${lg('e2','#1a8fe6','#0c5cc0','x2=".3" y2="1"')}${lg('e3','#0d63b8','#134b94')}</defs>`+
  E(24,24,24,24,'url(#e2)')+D('M1 20C4 8 13 0 25 0C38 0 48 10 48 22C48 29 43 32.500 37 32.500C30 32.500 28 30 29.500 27.500C33 22 29 12 18 12C9 12 3 16 1 20Z','url(#e1)')+D('M18.500 14C12 20 12 36 25 41C33 44 40 41 45 36C42 44 34 48 25 48C14 48 9 38 10 28C11 20 14 16 18.500 14Z','url(#e3)')+D('M18 27C18 20 25 17 28.500 21C30.500 24 28 28 29 30C30.500 33 37 35 44 31L49 30L47 35Q45 37 44 36C39 40 32 40 26 38C21 36 18 32 18 27Z','#212323')),
 files:ic('k',171,93,281,222,`<defs>${lg('f1','#ffe083','#ffb81c')}${lg('f2','#0f8be0','#0a62b5')}</defs>`+D('M171 96Q171 93 176 93H204Q208 93 211 97L220 106H281V130H171Z','#e0a010')+D('M171 118H203Q208 118 212 112L218 107H281V216Q281 222 276 222H176Q171 222 171 216Z','url(#f1)')+D('M189 222V190Q190 180 200 180H252Q263 180 263 190V222Z','url(#f2)')+R(203,198,46,5,'#0a4f96')),
 store:ic('k',376,84,482,228,`<defs>${lg('s1','#fff','#dcdcdc','x2="0" y2="1"')}</defs>`+D('M376 105H482V210Q480 228 464 228H394Q378 228 376 210Z','url(#s1)')+L('M402 117V95Q402 87 408 87H450Q457 87 457 95V117','#1fb0f5',3)+R(406,135,21,27,'#f35325')+R(431,135,21,27,'#81bc06')+R(406,168,21,27,'#05a6f0')+R(431,168,21,27,'#ffba08')),
 m365:ic('k',586,90,679,222,`<defs>${lg('m1','#c77fe6','#3b5fd0','x2=".2" y2="1"')}${lg('m2','#1f5fc4','#5cd8fb')}${lg('m3','#6a4a9e','#d49bf5','x1="1" x2="0" y2="1"')}</defs>`+
  D('M632 90L678 125V185L632 222L587 186V125Z','url(#m2)')+D('M632 90L590 118Q586 124 586 135V180Q588 196 604 202Q617 198 617 184V140Q615 104 632 90Z','url(#m1)')+D('M679 155V182Q678 192 668 198L632 222L603 202Q616 198 632 180Q660 172 679 155Z','url(#m3)')+E(632,156,17,24,'#202224')),
 excel:ic('k',779,93,888,219,R(805,93,83,126,'#21a366')+R(846,93,42,33,'#33c481')+R(846,126,42,30,'#21a366')+R(805,156,83,63,'#107c41')+R(805,186,83,33,'#185c37')+R(779,120,56,72,'#0f7038','rx="3"')+`<g transform="translate(807 176) scale(.77 1)"><text font-family="Open Sans" font-weight="700" font-size="54" text-anchor="middle" fill="#fff">X</text></g>`),
 chrome:px(1106,1368,48,48,D('M24 24L3.200 12A24 24 0 0 1 44.800 12Z','#e33b2e')+D('M24 24L3.200 12A24 24 0 0 0 24 48L34.400 30Z','#2a9247')+D('M24 12H44.800A24 24 0 0 1 24 48L34.400 30Z','#fdc62f')+E(24,24,12,12,'#fff')+E(24,24,9.3,9.3,'#2e7bf0')),
 spotify:px(1196,1370,44,44,E(22,22,22,22,'#1ed760')+L('M8 14.500Q23 9.500 36 17','#17211a',4.6,'stroke-linecap="round"')+L('M10 22Q22 18 33.500 24.500','#17211a',3.8,'stroke-linecap="round"')+L('M11 29.500Q22 26 31 31','#17211a',3.2,'stroke-linecap="round"')),
 fusion:ic('k',1394,84,1494,228,D('M1394 95L1410 84V180L1394 196Z','#ff9a52')+D('M1410 84H1480Q1487 84 1487 92V186H1408V90Z','#ff6b00')+D('M1487 106L1494 112V228H1402V196L1408 186H1487Z','#8c3a04')+D('M1487 104L1493 110V186H1487Z','#d95800')+`<g transform="translate(1449 163) scale(.77 1)"><text font-family="Open Sans" font-weight="800" font-size="74" text-anchor="middle" fill="#fff">F</text></g><g transform="translate(1448 214) scale(.8 1)"><text font-family="Open Sans" font-weight="700" font-size="29" text-anchor="middle" fill="#ffe9db">360</text></g>`)
};
def('task-bar',()=>`<style>:host{display:flex;height:96px;background:#212222;border-top:2px solid #474747;color:#fff;font-family:"Open Sans","Noto Sans",sans-serif}
 .pill{width:440px;height:64px;border-radius:32px;background:#3a3b3b;border:1px solid #444545}.clock{display:flex;flex-direction:column}</style>`+
 row(0,1346,[
  ic('s',92,330,195,468,`<defs><linearGradient id="w" gradientUnits="userSpaceOnUse" x1="92" y1="330" x2="195" y2="468"><stop offset="0" stop-color="#8be2ff"/><stop offset=".5" stop-color="#3cc0ff"/><stop offset="1" stop-color="#0b93fb"/></linearGradient></defs>`+R(92,330,49,66,'url(#w)','rx="2"')+R(146,330,49,66,'url(#w)','rx="2"')+R(92,402,49,66,'url(#w)','rx="2"')+R(146,402,49,66,'url(#w)','rx="2"')),
  {x:114,y:1360,w:440,h:64,html:`<div class="pill">`+row(115,1361,[ic('s',308,350,373,441,E(337,389,27,37,'#50504f','stroke="#e6e6e6" stroke-width="2.600"')+L('M355 418L371 439','#e6e6e6',3.6)),tx('Search',189,269.5,1392.500,27,'color:#d6d6d6'),desk])+`</div>`},
  px(578,1370,48,44,`<defs>${lg('tv','#fff','#dadada')}</defs>`+R(0,12,36,32,'#6d6d6d','rx="2"')+R(12,0,36,32,'url(#tv)','rx="2"')+R(12,12,24,20,'#bcbcbc')),
  app(666,A.edge),app(754,A.files,dot()),app(843,A.store),app(934,A.m365),app(1018,A.excel,dot()),app(1106,A.chrome,dot()),app(1196,A.spotify,dot()),
  {x:1266,y:1352,w:80,h:80,html:`<div style="width:80px;height:80px;border-radius:9px;background:#2f3030;border:1px solid #3b3c3c;display:flex;flex-direction:column;align-items:center"><div style="margin-top:15px;height:56px">${A.fusion.html}</div>${dot(0,32,'#4cc2ff')}</div>`},
  ic('y',96,136,152,174,L('M98 171L124 140L150 171','#fff',2.4)),
  ic('y',245,122,326,188,D('M262 150Q270 122 290 124Q308 126 312 150L322 170H255Z','#8b8b8b')+D('M245 165Q247 138 268 140Q284 132 300 150L300 187H252Q245 182 245 165Z','#c9c9c9')+D('M248 180Q255 165 275 163Q295 142 314 155Q328 165 326 178Q324 188 312 188H256Q248 188 248 180Z','#f6f6f6')),
  tx('ISL',2115.5,2143.6,1393,23.5),
  ic('y',629,120,712,189,L('M631 148Q671 96 711 148M642 162Q671 126 700 162M653 173Q671 150 689 173','#fff',2.4)+E(671,180,8,9,'#fff')),
  ic('y',751,115,832,197,D('M752 144Q752 139 757 139H765L785 123V189L765 174H757Q752 174 752 169Z','none','stroke="#fff" stroke-width="2.200"')+L('M795 140Q803 156 795 173M804 128Q818 156 804 185M814 116Q845 156 814 196','#fff',2.200)),
  ic('y',872,108,953,188,L('M900 127H935Q943 127 943 138V174Q943 185 935 185H882Q875 185 875 175V150','#fff',2.400)+R(883,136,53,41,'#fff')+R(944,146,9,20,'#fff')+D('M885 108L874 146H884L877 172L898 134H889L893 108Z','#fff','stroke="#212222" stroke-width="1.200"')),
  {x:2350,y:1359,w:123,h:70,html:`<div class="clock"><fit-text w="58" style="align-self:flex-end;font-size:23px;line-height:32px">14:47</fit-text><fit-text w="124" style="font-size:23px;line-height:32px">20/04/2023</fit-text></div>`},
  box(2485,1376,40,32,'border-radius:16px;background:#4cc2ff;color:#10202a;display:flex;align-items:center;justify-content:center',`<fit-text w="22" style="font-size:20px;line-height:30px">20</fit-text>`)
 ]));

def('fusion-desktop',()=>`<style>:host{display:flex;flex-direction:column;width:2560px;height:1440px;background:#fff}
 .tb{background:#f1f1f1}.main{display:flex;height:1058px}.strip{height:8px;background:#f1f1f1}</style>
 <window-titlebar></window-titlebar><div class="tb"><doc-tabs></doc-tabs></div><tool-ribbon></tool-ribbon>
 <div class="main"><browser-panel></browser-panel><model-viewport></model-viewport></div><div class="strip"></div><task-bar></task-bar>`);
</script>
</body>
</html>
